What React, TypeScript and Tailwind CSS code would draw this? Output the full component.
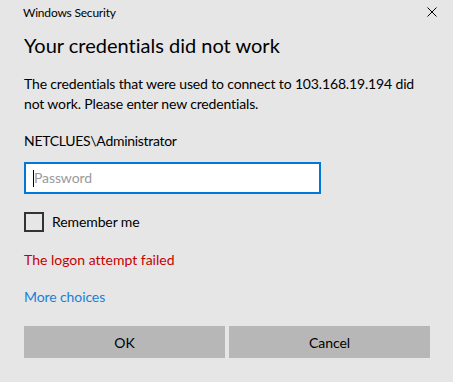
import React from "react";

export default function App() {
  return (
    <div
      className="w-[453px] h-[382px] bg-[#e6e6e6] overflow-hidden text-black flex flex-col [font-variant-ligatures:none]"
      style={{ fontFamily: 'Lato, "Noto Sans", sans-serif' }}
    >
      <div className="h-[26px] flex items-center justify-between pl-[23px] pr-[16px]">
        <span className="text-[12px] leading-[16px] tracking-[-0.2px]">Windows Security</span>
        <svg width="10" height="10" viewBox="0 0 10 10" className="mb-[2px]">
          <path d="M0.5 0.5 L9.5 9.5 M9.5 0.5 L0.5 9.5" stroke="#000" strokeWidth="1" fill="none" />
        </svg>
      </div>
      <div className="pl-[24px] pr-[16px] flex flex-col text-[14px] tracking-[-0.1px]">
        <h1 className="mt-[5px] text-[20px] leading-[28px] font-normal tracking-[0px]">Your credentials did not work</h1>
        <p className="mt-[15px] leading-[20px] whitespace-nowrap tracking-[-0.15px]">
          The credentials that were used to connect to 103.168.19.194 did
          <br />
          not work. Please enter new credentials.
        </p>
        <div className="mt-[17px] leading-[20px] tracking-[-0.3px]">NETCLUES\Administrator</div>
        <div className="mt-[11px] w-[297px] h-[32px] bg-white border-2 border-[#0078d7] flex items-center pl-[7px]">
          <span className="w-[1px] h-[17px] bg-black" />
          <span className="leading-[20px] text-[#9a9a9a]">Password</span>
        </div>
        <div className="mt-[18px] h-[20px] flex items-center gap-[8px]">
          <span className="w-[20px] h-[20px] border-2 border-[#333333] box-border" />
          <span className="leading-[20px]">Remember me</span>
        </div>
        <div className="mt-[18px] leading-[20px] text-[#c80000] tracking-[0px]">The logon attempt failed</div>
        <div className="mt-[17px] leading-[20px] text-[#1a7fd9]">More choices</div>
        <div className="mt-[19px] flex gap-[4px]">
          <div className="w-[201px] h-[32px] bg-[#b7b7b7] flex items-center justify-center">OK</div>
          <div className="w-[201px] h-[32px] bg-[#b7b7b7] flex items-center justify-center">Cancel</div>
        </div>
      </div>
    </div>
  );
}
